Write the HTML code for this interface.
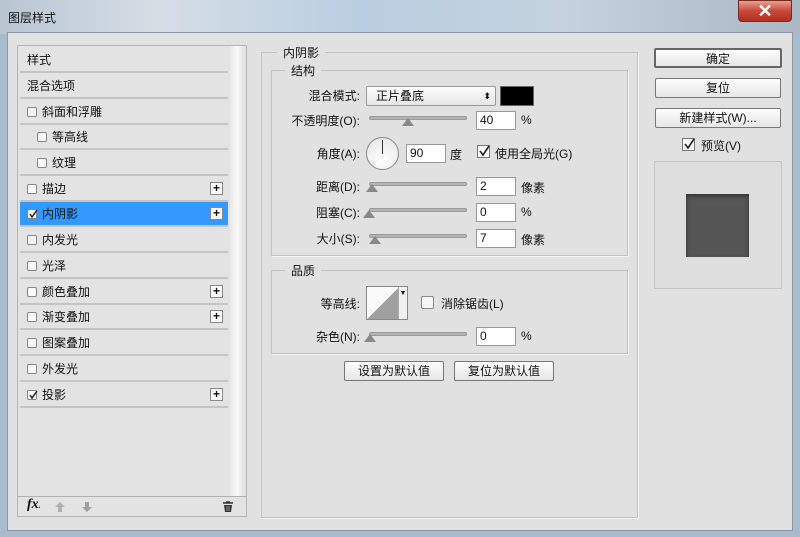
<!DOCTYPE html>
<html><head><meta charset="utf-8"><style>
*{margin:0;padding:0;box-sizing:border-box}
body{width:800px;height:537px;overflow:hidden;position:relative;background:#a9bccd;font-family:"Liberation Sans","Noto Sans CJK SC",sans-serif;font-size:12px;color:#111}
.a{position:absolute}
.title{left:0;top:0;width:800px;height:34px;background:linear-gradient(90deg,#b8c6d2 0%,#d6dee6 20%,#b9cee0 45%,#c4d3df 70%,#a9b8c4 100%)}
.body{left:7px;top:32px;width:786px;height:499px;background:#e1e1e1;border:1px solid #8a97a3}
.row{left:20px;width:208px;height:25px;border-bottom:2px solid #c4c4c4;background:#e3e3e3;line-height:24px;padding-left:7px}
.cb{display:inline-block;width:10px;height:10px;border:1px solid #888;background:#fafafa;border-radius:2px;vertical-align:-1px;margin-right:5px;position:relative}
.cb svg{position:absolute;left:0;top:-1px}
.plus{position:absolute;right:5px;top:5px;width:13px;height:13px;border:1px solid #888;background:#fafafa;font-size:12px;line-height:10px;text-align:center;font-weight:bold}
.fs{border:1px solid #c2c2c2;box-shadow:1px 1px 0 #f4f4f4}
.lg{background:#e1e1e1;padding:0 6px}
.lbl{text-align:right;width:100px}
.sl{height:4px;width:98px;background:#b5b5b5;border:1px solid #999;border-radius:2px}
.th{width:0;height:0;border-left:6px solid transparent;border-right:6px solid transparent;border-bottom:8px solid #888}
.in{width:40px;height:19px;background:#fff;border:1px solid #999;padding-left:3px;line-height:17px}
.btn{height:20px;border:1px solid #777;border-radius:2px;background:linear-gradient(#fdfdfd,#e6e6e6);text-align:center;line-height:18px}
</style></head><body>
<div class="a title"></div>
<div class="a" style="left:8px;top:9px;font-size:12px">图层样式</div>
<div class="a" style="left:738px;top:0;width:54px;height:22px;background:linear-gradient(#e8a090,#c8483a 50%,#b03020);border:1px solid #7a2a20;border-radius:0 0 4px 4px;color:#fff;font-size:18px;font-weight:bold;text-align:center;line-height:20px">✕</div>
<div class="a body"></div>

<div class="a" style="left:17px;top:45px;width:230px;height:472px;border:1px solid #b5b5b5;background:#e3e3e3"></div>
<div class="a" style="left:230px;top:46px;width:15px;height:450px;background:linear-gradient(90deg,#e8e8e8,#fafafa,#e0e0e0)"></div>
<div class="a row" style="top:48px">样式</div>
<div class="a row" style="top:74px">混合选项</div>
<div class="a row" style="top:100px"><span class="cb"></span>斜面和浮雕</div>
<div class="a row" style="top:125px;padding-left:17px"><span class="cb"></span>等高线</div>
<div class="a row" style="top:151px;padding-left:17px"><span class="cb"></span>纹理</div>
<div class="a row" style="top:177px"><span class="cb"></span>描边<span class="plus">+</span></div>
<div class="a row" style="top:202px;background:#3399ff"><span class="cb"><svg width="10" height="10"><path d="M2 5 L4 8 L9 1" stroke="#222" stroke-width="1.5" fill="none"/></svg></span>内阴影<span class="plus">+</span></div>
<div class="a row" style="top:228px"><span class="cb"></span>内发光</div>
<div class="a row" style="top:254px"><span class="cb"></span>光泽</div>
<div class="a row" style="top:280px"><span class="cb"></span>颜色叠加<span class="plus">+</span></div>
<div class="a row" style="top:305px"><span class="cb"></span>渐变叠加<span class="plus">+</span></div>
<div class="a row" style="top:331px"><span class="cb"></span>图案叠加</div>
<div class="a row" style="top:357px"><span class="cb"></span>外发光</div>
<div class="a row" style="top:383px"><span class="cb"><svg width="10" height="10"><path d="M2 5 L4 8 L9 1" stroke="#222" stroke-width="1.5" fill="none"/></svg></span>投影<span class="plus">+</span></div>
<div class="a" style="left:18px;top:496px;width:228px;height:1px;background:#b0b0b0"></div>
<div class="a" style="left:27px;top:497px;font-style:italic;font-weight:bold;font-family:'Liberation Serif',serif;font-size:14px">fx<span style="font-size:8px">.</span></div>
<svg class="a" style="left:54px;top:501px" width="12" height="12"><path d="M6 1 L11 6 L8 6 L8 11 L4 11 L4 6 L1 6Z" fill="#b0b0b0"/></svg>
<svg class="a" style="left:81px;top:501px" width="12" height="12"><path d="M6 11 L11 6 L8 6 L8 1 L4 1 L4 6 L1 6Z" fill="#a0a0a0"/></svg>
<svg class="a" style="left:222px;top:501px" width="12" height="12"><path d="M1 2 H11 M4 1 H8" stroke="#333" stroke-width="1.5"/><path d="M2 4 H10 L9 11 H3Z" fill="#333"/><path d="M5 5 V10 M7 5 V10" stroke="#aaa" stroke-width="0.8"/></svg>

<div class="a fs" style="left:261px;top:52px;width:377px;height:466px"></div>
<div class="a lg" style="left:277px;top:44px">内阴影</div>
<div class="a fs" style="left:271px;top:70px;width:357px;height:186px"></div>
<div class="a lg" style="left:285px;top:62px">结构</div>

<div class="a lbl" style="left:260px;top:87px">混合模式:</div>
<div class="a btn" style="left:366px;top:86px;width:130px;text-align:left;padding-left:9px;border-color:#999">正片叠底<span style="position:absolute;right:4px;top:0;font-size:9px">⬍</span></div>
<div class="a" style="left:500px;top:86px;width:34px;height:20px;background:#000;border:1px solid #666"></div>

<div class="a lbl" style="left:260px;top:112px">不透明度(O):</div>
<div class="a sl" style="left:369px;top:116px"></div>
<div class="a th" style="left:402px;top:118px"></div>
<div class="a in" style="left:476px;top:111px">40</div>
<div class="a" style="left:521px;top:113px">%</div>

<div class="a lbl" style="left:260px;top:145px">角度(A):</div>
<div class="a" style="left:366px;top:137px;width:33px;height:33px;border-radius:50%;border:1px solid #888;background:radial-gradient(circle at 50% 70%,#fff,#e4e4e4)"></div>
<div class="a" style="left:382px;top:140px;width:1px;height:14px;background:#333"></div>
<div class="a in" style="left:406px;top:144px">90</div>
<div class="a" style="left:450px;top:146px">度</div>
<div class="a" style="left:477px;top:145px;width:13px;height:13px;border:1px solid #777;background:#fafafa"><svg width="12" height="12" style="position:absolute;left:0;top:-1px"><path d="M2 6 L5 10 L11 1" stroke="#222" stroke-width="1.6" fill="none"/></svg></div>
<div class="a" style="left:495px;top:145px">使用全局光(G)</div>

<div class="a lbl" style="left:260px;top:178px">距离(D):</div>
<div class="a sl" style="left:369px;top:182px"></div>
<div class="a th" style="left:366px;top:184px"></div>
<div class="a in" style="left:476px;top:177px">2</div>
<div class="a" style="left:521px;top:179px">像素</div>

<div class="a lbl" style="left:260px;top:204px">阻塞(C):</div>
<div class="a sl" style="left:369px;top:208px"></div>
<div class="a th" style="left:363px;top:210px"></div>
<div class="a in" style="left:476px;top:203px">0</div>
<div class="a" style="left:521px;top:205px">%</div>

<div class="a lbl" style="left:260px;top:230px">大小(S):</div>
<div class="a sl" style="left:369px;top:234px"></div>
<div class="a th" style="left:369px;top:236px"></div>
<div class="a in" style="left:476px;top:229px">7</div>
<div class="a" style="left:521px;top:231px">像素</div>

<div class="a fs" style="left:271px;top:270px;width:357px;height:84px"></div>
<div class="a lg" style="left:285px;top:262px">品质</div>
<div class="a lbl" style="left:260px;top:295px">等高线:</div>
<div class="a" style="left:366px;top:286px;width:42px;height:34px;border:1px solid #888;background:linear-gradient(to top left,#a0a0a0 50%,#fafafa 50%) 0 0/32px 32px no-repeat,#fafafa"></div>
<div class="a" style="left:398px;top:287px;width:9px;height:32px;background:#f0f0f0;border-left:1px solid #aaa;font-size:7px;text-align:center;line-height:14px">▼</div>
<div class="a" style="left:421px;top:296px;width:13px;height:13px;border:1px solid #888;background:#f6f6f6;border-radius:2px"></div>
<div class="a" style="left:441px;top:295px">消除锯齿(L)</div>
<div class="a lbl" style="left:260px;top:328px">杂色(N):</div>
<div class="a sl" style="left:369px;top:332px"></div>
<div class="a th" style="left:364px;top:334px"></div>
<div class="a in" style="left:476px;top:327px">0</div>
<div class="a" style="left:521px;top:329px">%</div>

<div class="a btn" style="left:344px;top:361px;width:100px">设置为默认值</div>
<div class="a btn" style="left:454px;top:361px;width:100px">复位为默认值</div>

<div class="a btn" style="left:654px;top:48px;width:128px;border:2px solid #666">确定</div>
<div class="a btn" style="left:655px;top:78px;width:126px">复位</div>
<div class="a btn" style="left:655px;top:108px;width:126px">新建样式(W)...</div>
<div class="a" style="left:682px;top:138px;width:13px;height:13px;border:1px solid #777;background:#fafafa"><svg width="12" height="12" style="position:absolute;left:0;top:-1px"><path d="M2 6 L5 10 L11 1" stroke="#222" stroke-width="1.6" fill="none"/></svg></div>
<div class="a" style="left:701px;top:137px">预览(V)</div>
<div class="a" style="left:654px;top:161px;width:128px;height:128px;border:1px solid #c4c4c4;background:#dedede"></div>
<div class="a" style="left:686px;top:194px;width:63px;height:63px;background:#565656;box-shadow:inset 0 2px 4px #333"></div>
</body></html>
